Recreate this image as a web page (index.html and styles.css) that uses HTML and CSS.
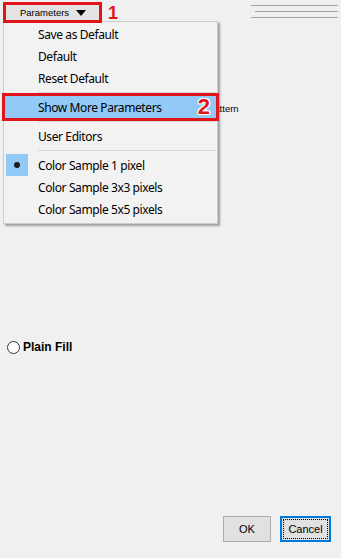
FILE: index.html
```html
<!DOCTYPE html>
<html>
<head>
<meta charset="utf-8">
<link rel="stylesheet" href="styles.css">
</head>
<body>
<div class="dialog">
  <div class="toolbar">
    <div class="param-frame">
      <button class="param-btn">Parameters <span class="tri"></span></button>
    </div>
    <span class="step1">1</span>
    <div class="lines"><i></i><i class="short"></i><i></i></div>
  </div>
  <div class="content">
    <div class="pattern-row">Pattern</div>
    <label class="radio-row"><span class="radio"></span>Plain Fill</label>
  </div>
  <div class="footer">
    <button class="btn ok">OK</button>
    <button class="btn cancel">Cancel</button>
  </div>
  <div class="menu">
    <div class="item"><span class="ic"></span>Save as Default</div>
    <div class="item"><span class="ic"></span>Default</div>
    <div class="item"><span class="ic"></span>Reset Default</div>
    <div class="sep"></div>
    <div class="item hot"><span class="ic"></span>Show More Parameters<span class="step2">2</span></div>
    <div class="sep"></div>
    <div class="item"><span class="ic"></span>User Editors</div>
    <div class="sep"></div>
    <div class="item"><span class="ic checked"><i class="dot"></i></span>Color Sample 1 pixel</div>
    <div class="item"><span class="ic"></span>Color Sample 3x3 pixels</div>
    <div class="item"><span class="ic"></span>Color Sample 5x5 pixels</div>
  </div>
</div>
</body>
</html>
```
FILE: styles.css
```css
* { box-sizing: border-box; }
html, body { margin: 0; padding: 0; }
body {
  width: 341px;
  height: 558px;
  overflow: hidden;
  background: #f0f0f0;
  font-family: "Liberation Sans", Arial, sans-serif;
  color: #000;
}
.dialog {
  position: relative;
  display: flex;
  flex-direction: column;
  height: 558px;
}
.toolbar {
  display: flex;
  align-items: flex-start;
  height: 24px;
}
.param-frame {
  position: relative;
  z-index: 3;
  margin: 2px 0 0 3px;
  width: 99px;
  height: 21px;
  border: 3px solid #e0141b;
  display: flex;
}
.param-btn {
  flex: 1;
  border: 0;
  margin: 0;
  background: #e3e3e3;
  font: 9.5px "Liberation Sans", Arial, sans-serif;
  color: #000;
  padding: 0 0 0 14px;
  display: flex;
  align-items: center;
  gap: 7px;
}
.tri {
  width: 0;
  height: 0;
  border-left: 5px solid transparent;
  border-right: 5px solid transparent;
  border-top: 6px solid #000;
}
.step1 {
  color: #e0141b;
  font: bold 18px/18px "Liberation Sans", Arial, sans-serif;
  margin: 4px 0 0 6px;
}
.lines {
  margin: 5px 3px 0 auto;
  width: 87px;
  display: flex;
  flex-direction: column;
  gap: 5px;
}
.lines i {
  display: block;
  height: 1px;
  background: #a3a3a3;
}
.lines i.short { margin-left: 4px; }

.content {
  display: flex;
  flex-direction: column;
}
.pattern-row {
  margin-top: 79px;
  padding-left: 208px;
  font: 9.5px/12px "Liberation Sans", Arial, sans-serif;
  color: #000;
}
.radio-row {
  margin-top: 225px;
  display: flex;
  align-items: center;
  height: 14px;
  font: bold 12px/14px "Liberation Sans", Arial, sans-serif;
}
.radio {
  width: 13px;
  height: 13px;
  margin: 0 3px 0 7px;
  border: 1px solid #333;
  border-radius: 50%;
  background: #fff;
}

.footer {
  margin-top: auto;
  display: flex;
  justify-content: flex-end;
  gap: 9px;
  padding: 0 10px 16px 0;
}
.btn {
  height: 26px;
  margin: 0;
  padding: 0;
  background: #e1e1e1;
  border: 1px solid #adadad;
  font: 11px "Liberation Sans", Arial, sans-serif;
  color: #000;
}
.btn.ok { width: 48px; }
.btn.cancel {
  width: 51px;
  border: 2px solid #0078d7;
  outline: 1px dotted #000;
  outline-offset: -4px;
}

.menu {
  position: absolute;
  left: 3px;
  top: 21px;
  width: 215px;
  z-index: 2;
  background: #f2f2f2;
  border: 1px solid #cccccc;
  padding: 1px 0 3px;
  box-shadow: 2px 2px 2px rgba(0, 0, 0, 0.35);
  font: 12px "Noto Sans", "Open Sans", sans-serif;
  letter-spacing: -0.4px;
  color: #000;
}
.item {
  position: relative;
  height: 22px;
  display: flex;
  align-items: center;
  white-space: nowrap;
}
.ic {
  width: 22px;
  height: 22px;
  margin: 0 10px 0 2px;
  display: flex;
  align-items: center;
  justify-content: center;
}
.ic.checked { background: #91c9f7; }
.dot {
  width: 6px;
  height: 6px;
  border-radius: 50%;
  background: #1b1b1b;
}
.item.hot {
  z-index: 1;
  margin: 0 1px;
  background: #91c9f7;
  outline: 3px solid #e0141b;
}
.item.hot .ic { margin-left: 1px; }
.step2 {
  margin: 0 6px 0 auto;
  color: #e0141b;
  letter-spacing: 0;
  font: bold 22px/22px "Liberation Sans", Arial, sans-serif;
  text-shadow: 1px 0 #fff, -1px 0 #fff, 0 1px #fff, 0 -1px #fff, 1px 1px #fff, -1px -1px #fff, 1px -1px #fff, -1px 1px #fff;
}
.sep {
  height: 7px;
  display: flex;
  align-items: center;
  padding: 0 1px 0 34px;
}
.sep::before {
  content: "";
  flex: 1;
  height: 1px;
  background: #d7d7d7;
}
```
